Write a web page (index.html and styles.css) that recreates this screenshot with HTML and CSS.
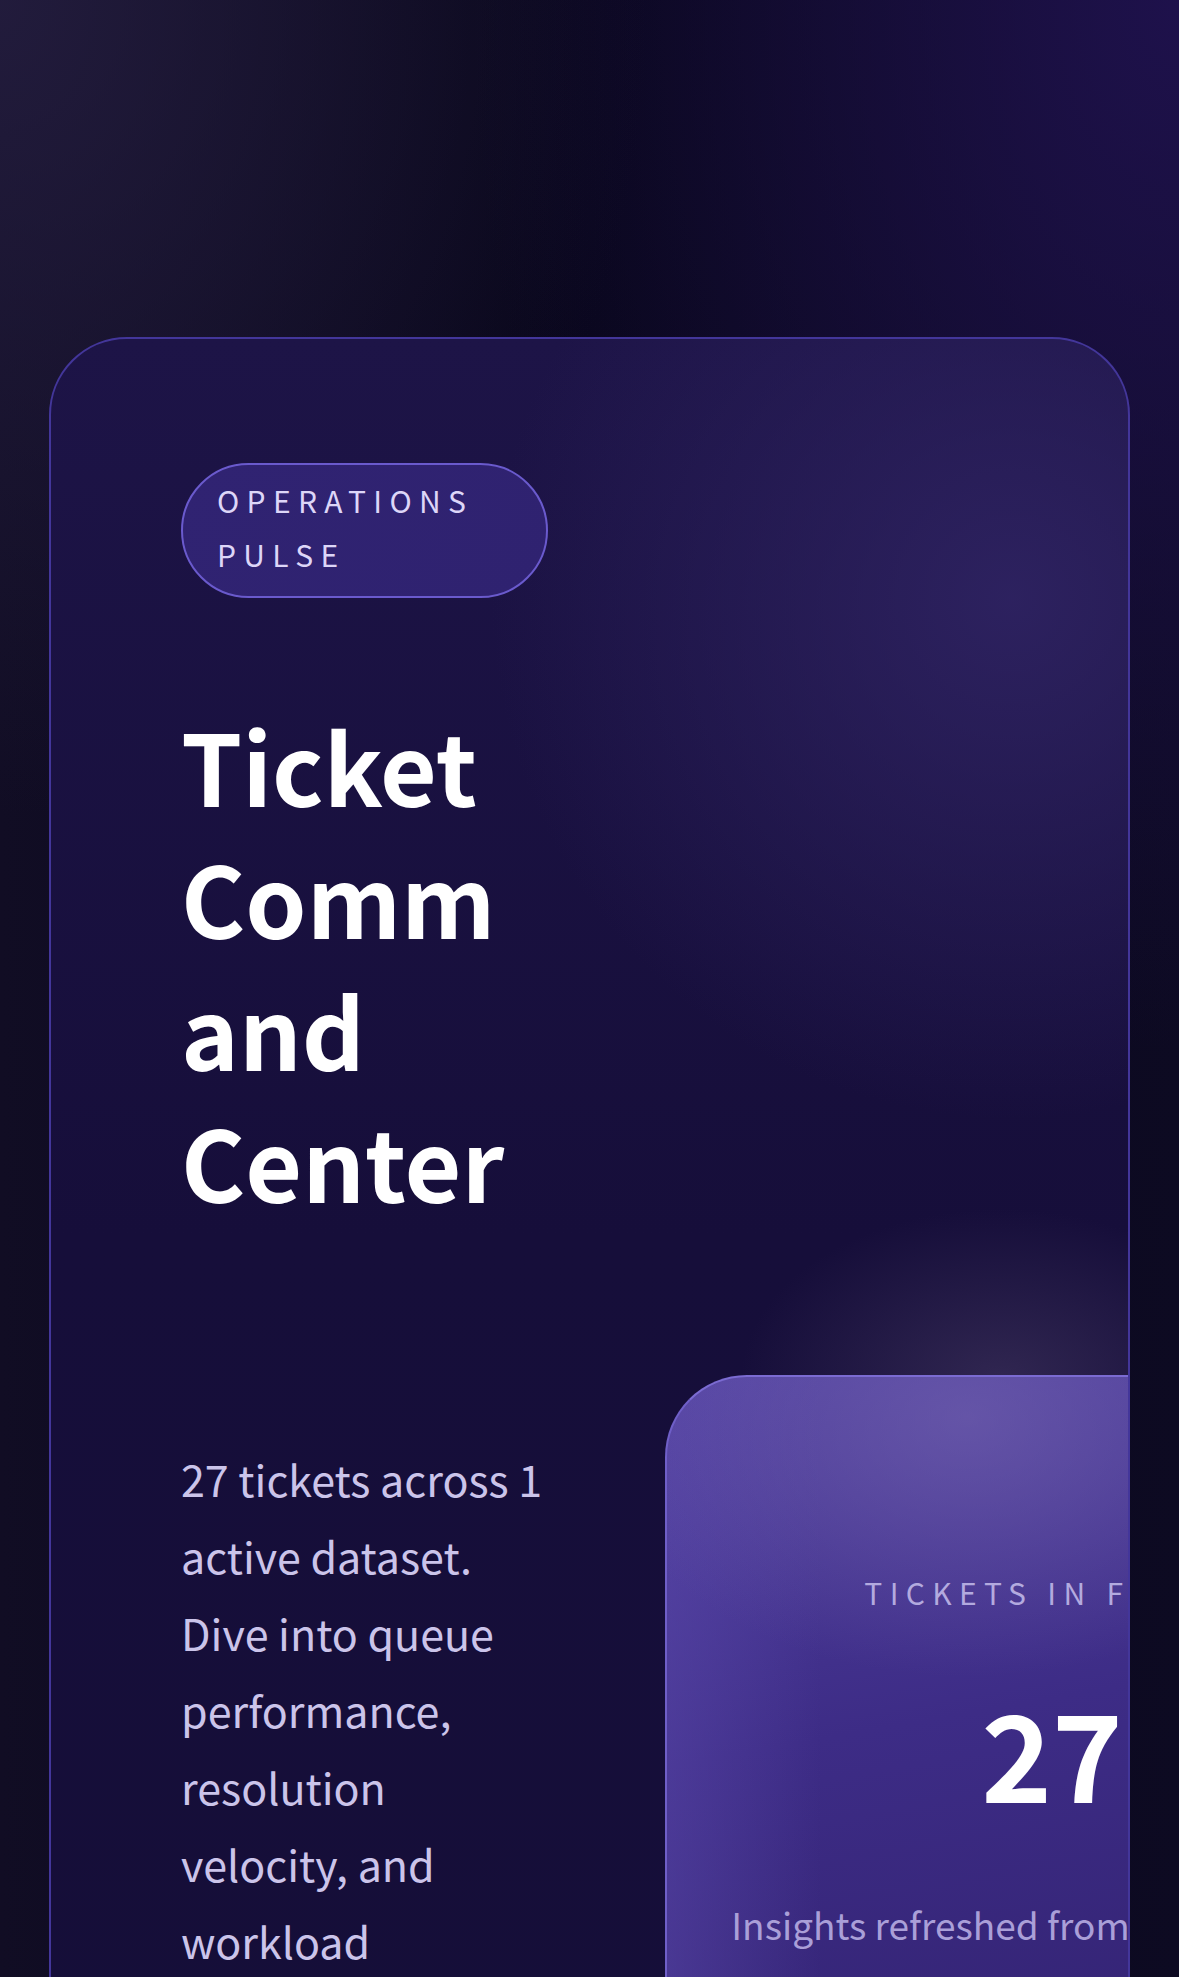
FILE: index.html
```html
<!DOCTYPE html>
<html lang="en">
<head>
<meta charset="utf-8">
<title>Ticket Command Center</title>
<link rel="stylesheet" href="styles.css">
</head>
<body>
  <main class="page">
    <section class="hero">
      <div class="hero-head">
        <span class="pill">Operations Pulse</span>
        <h1 class="title">Ticket Command Center</h1>
      </div>
      <div class="hero-body">
        <p class="lede">27 tickets across 1 active dataset. Dive into queue performance, resolution velocity, and workload distribution across every support team.</p>
        <div class="stat">
          <span class="stat-label">Tickets in focus</span>
          <span class="stat-value">27</span>
          <span class="stat-note">Insights refreshed from your last sync moments ago.</span>
        </div>
      </div>
    </section>
  </main>
</body>
</html>
```

FILE: styles.css
```css
* { box-sizing: border-box; }

html, body {
  margin: 0;
  padding: 0;
}

body {
  min-height: 1977px;
  font-family: "Noto Sans CJK SC", "Noto Sans", sans-serif;
  color: #ffffff;
  background:
    radial-gradient(ellipse 55% 35% at 0% 0%, rgba(38, 31, 66, 0.8), rgba(38, 31, 66, 0) 100%),
    radial-gradient(ellipse 60% 45% at 100% 0%, rgba(32, 18, 80, 0.9), rgba(32, 18, 80, 0) 100%),
    linear-gradient(90deg, #110d24 0%, #08061a 50%, #0d0a22 100%);
}

.page {
  padding: 337px 49px 0;
}

.hero {
  border: 2px solid #43369a;
  border-radius: 78px;
  padding: 124px 130px 120px;
  overflow: hidden;
  background:
    radial-gradient(ellipse 260px 170px at 950px 1040px, rgba(70, 58, 100, 0.55), rgba(70, 58, 100, 0) 100%),
    radial-gradient(ellipse 520px 520px at 960px 260px, rgba(48, 36, 100, 0.85), rgba(48, 36, 100, 0) 100%),
    linear-gradient(180deg, #1d1447 0%, #160e3a 45%, #150e38 100%);
}

.hero-head {
  width: 367px;
}

.pill {
  display: inline-block;
  padding: 8px 34px 15px;
  border: 2px solid #6a5acd;
  border-radius: 80px;
  background: linear-gradient(135deg, #302372 0%, #2f2270 100%);
  color: #ddd6f8;
  font-size: 30px;
  line-height: 54px;
  letter-spacing: 0.245em;
  text-transform: uppercase;
}

.title {
  max-width: 340px;
  margin: 100px 0 0;
  font-size: 98px;
  line-height: 132px;
  font-weight: 700;
  color: #ffffff;
  overflow-wrap: anywhere;
}

.hero-body {
  display: grid;
  grid-template-columns: 367px 774px;
  column-gap: 117px;
  align-items: start;
  margin-top: 149px;
}

.lede {
  margin: 65px 0 0;
  font-size: 43px;
  line-height: 77px;
  color: #cbc4ea;
}

.stat {
  display: flex;
  flex-direction: column;
  align-items: center;
  padding: 188px 40px 80px;
  border: 2px solid #6f5fc8;
  border-top-color: #7b6bd2;
  border-radius: 82px;
  text-align: center;
  background:
    radial-gradient(ellipse 380px 260px at 300px 40px, rgba(120, 104, 178, 0.55), rgba(120, 104, 178, 0) 100%),
    linear-gradient(90deg, rgba(90, 72, 170, 0.5) 0%, rgba(90, 72, 170, 0) 20%),
    linear-gradient(170deg, #5141a0 0%, #3d2c86 45%, #31216f 100%);
}

.stat-label {
  font-size: 30px;
  line-height: 54px;
  letter-spacing: 0.245em;
  text-transform: uppercase;
  color: #b3aadf;
}

.stat-value {
  margin-top: 72px;
  font-size: 120px;
  line-height: 1;
  font-weight: 700;
  color: #ffffff;
}

.stat-note {
  margin-top: 79px;
  font-size: 37px;
  line-height: 68px;
  color: #aa9fd8;
}
```
